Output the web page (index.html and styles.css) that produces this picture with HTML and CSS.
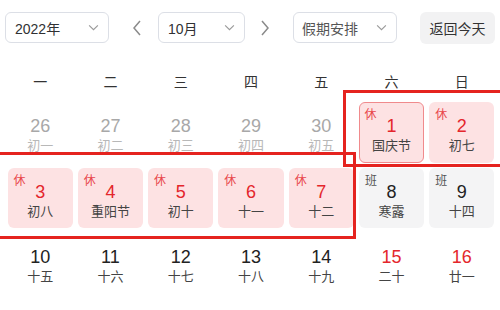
FILE: index.html
```html
<!DOCTYPE html>
<html lang="zh-CN">
<head>
<meta charset="utf-8">
<link rel="stylesheet" href="styles.css">
</head>
<body>
<div class="page">
  <div class="toolbar">
    <div class="select year"><span>2022年</span><svg class="chev" viewBox="0 0 12 8"><path d="M1 1.5 L6 6.5 L11 1.5"/></svg></div>
    <svg class="arrow prev" viewBox="0 0 10 16"><path d="M8 1 L2 8 L8 15"/></svg>
    <div class="select month"><span>10月</span><svg class="chev" viewBox="0 0 12 8"><path d="M1 1.5 L6 6.5 L11 1.5"/></svg></div>
    <svg class="arrow next" viewBox="0 0 10 16"><path d="M2 1 L8 8 L2 15"/></svg>
    <div class="select holiday"><span>假期安排</span><svg class="chev" viewBox="0 0 12 8"><path d="M1 1.5 L6 6.5 L11 1.5"/></svg></div>
    <div class="btn">返回今天</div>
  </div>
  <div class="weekdays">
    <div>一</div><div>二</div><div>三</div><div>四</div><div>五</div><div>六</div><div>日</div>
  </div>
  <div class="grid">
    <div class="cell other"><div class="num">26</div><div class="lunar">初一</div></div>
    <div class="cell other"><div class="num">27</div><div class="lunar">初二</div></div>
    <div class="cell other"><div class="num">28</div><div class="lunar">初三</div></div>
    <div class="cell other"><div class="num">29</div><div class="lunar">初四</div></div>
    <div class="cell other"><div class="num">30</div><div class="lunar">初五</div></div>
    <div class="cell rest today"><span class="tag">休</span><div class="num">1</div><div class="lunar">国庆节</div></div>
    <div class="cell rest"><span class="tag">休</span><div class="num">2</div><div class="lunar">初七</div></div>

    <div class="cell rest"><span class="tag">休</span><div class="num">3</div><div class="lunar">初八</div></div>
    <div class="cell rest"><span class="tag">休</span><div class="num">4</div><div class="lunar">重阳节</div></div>
    <div class="cell rest"><span class="tag">休</span><div class="num">5</div><div class="lunar">初十</div></div>
    <div class="cell rest"><span class="tag">休</span><div class="num">6</div><div class="lunar">十一</div></div>
    <div class="cell rest"><span class="tag">休</span><div class="num">7</div><div class="lunar">十二</div></div>
    <div class="cell work"><span class="tag">班</span><div class="num">8</div><div class="lunar">寒露</div></div>
    <div class="cell work"><span class="tag">班</span><div class="num">9</div><div class="lunar">十四</div></div>

    <div class="cell"><div class="num">10</div><div class="lunar">十五</div></div>
    <div class="cell"><div class="num">11</div><div class="lunar">十六</div></div>
    <div class="cell"><div class="num">12</div><div class="lunar">十七</div></div>
    <div class="cell"><div class="num">13</div><div class="lunar">十八</div></div>
    <div class="cell"><div class="num">14</div><div class="lunar">十九</div></div>
    <div class="cell weekend"><div class="num">15</div><div class="lunar">二十</div></div>
    <div class="cell weekend"><div class="num">16</div><div class="lunar">廿一</div></div>
  </div>
  <div class="mark mark-a"></div>
  <div class="mark mark-b"></div>
</div>
</body>
</html>
```
FILE: styles.css
```css
html, body {
  margin: 0;
  padding: 0;
  background: #ffffff;
  overflow: hidden;
}
body {
  width: 500px;
  height: 310px;
  font-family: "Liberation Sans", "Noto Sans CJK SC", sans-serif;
  color: #333333;
}
.page {
  position: relative;
  padding: 12px 3px 0 5px;
  height: 298px;
}
.toolbar {
  display: flex;
  align-items: center;
  height: 31px;
}
.select {
  box-sizing: border-box;
  height: 31px;
  border: 1px solid #dcdfe6;
  border-radius: 6px;
  display: flex;
  align-items: center;
  justify-content: space-between;
  padding: 0 9px 0 9px;
  font-size: 14px;
  color: #303133;
}
.select.year { width: 104px; }
.select.month { width: 87px; margin-left: 16px; }
.select.holiday { width: 104px; margin-left: 23px; padding-left: 8px; color: #555; }
.chev {
  width: 11px;
  height: 7px;
  fill: none;
  stroke: #9a9a9a;
  stroke-width: 1.3;
}
.arrow {
  width: 10px;
  height: 16px;
  fill: none;
  stroke: #8a8a8a;
  stroke-width: 1.5;
}
.arrow.prev { margin-left: 23px; }
.arrow.next { margin-left: 15px; }
.btn {
  margin-left: 23px;
  height: 32px;
  width: 75px;
  box-sizing: border-box;
  border-radius: 6px;
  background: #f2f2f3;
  display: flex;
  align-items: center;
  justify-content: center;
  font-size: 14px;
  color: #333;
}
.weekdays {
  display: grid;
  grid-template-columns: repeat(7, 1fr);
  margin-top: 18px;
  height: 40px;
  align-items: center;
  font-size: 14px;
  color: #333;
  text-align: center;
  width: 492px;
}
.grid {
  display: grid;
  grid-template-columns: repeat(7, 1fr);
  grid-auto-rows: 60.5px;
  row-gap: 5px;
  width: 492px;
  margin-top: 1px;
}
.cell {
  position: relative;
  margin: 0 2.5px;
  border-radius: 6px;
  box-sizing: border-box;
  display: flex;
  flex-direction: column;
  align-items: center;
  padding-top: 13px;
}
.num {
  font-size: 18px;
  line-height: 22px;
  color: #222;
}
.lunar {
  font-size: 13px;
  line-height: 16px;
  margin-top: 1px;
  color: #444;
}
.cell.other .num { color: #a8a8a8; }
.cell.other .lunar { color: #b8b8b8; }
.cell.rest { background: #fde2e3; }
.cell.rest .num { color: #e4262c; }
.cell.today { border: 1.5px solid #f08a8c; padding-top: 11.5px; }
.cell.work { background: #f4f4f5; }
.cell.weekend .num { color: #e4262c; }
.tag {
  position: absolute;
  left: 6px;
  top: 6px;
  font-size: 12px;
  line-height: 14px;
  color: #e8464a;
}
.cell.today .tag { left: 4.5px; top: 4.5px; }
.cell.work .tag { color: #555; }
.mark {
  position: absolute;
  border: 3px solid #e5231f;
  box-sizing: border-box;
  pointer-events: none;
}
.mark-a {
  left: 343px;
  top: 90px;
  width: 180px;
  height: 77px;
}
.mark-b {
  left: -20px;
  top: 152px;
  width: 376px;
  height: 87px;
}
```
